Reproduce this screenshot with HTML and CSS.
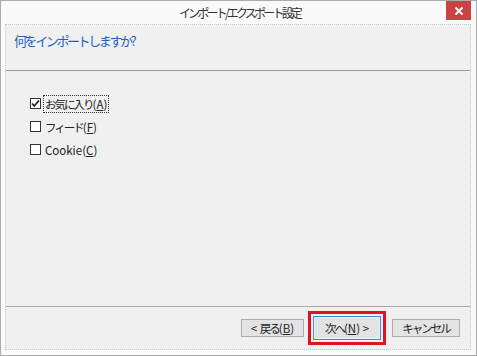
FILE: index.html
```html
<html>

<head>
	<link rel="stylesheet" href="styles.css">
</head>

<body>
	<div class="window">
		<div class="titlebar">
			<span class="title">インポート/エクスポート設定</span>
			<div class="close">
				<svg width="10" height="10" viewBox="0 0 10 10">
					<path d="M1.5 1.5 L8.5 8.5 M8.5 1.5 L1.5 8.5" stroke="#fff" stroke-width="2" />
				</svg>
			</div>
		</div>

		<div class="panel">
			<div class="header">何をインポートしますか?</div>

			<div class="options">
				<label class="option">
					<span class="box">
						<svg width="9" height="9" viewBox="0 0 9 9">
							<path d="M1 4.5 L3.3 7 L8 1.5" stroke="#222" stroke-width="1.8" fill="none" />
						</svg>
					</span>
					<span class="label focused"><span class="jp">お気に入り</span>(<u>A</u>)</span>
				</label>
				<label class="option">
					<span class="box"></span>
					<span class="label"><span class="jp">フィード</span>(<u>F</u>)</span>
				</label>
				<label class="option">
					<span class="box"></span>
					<span class="label">Cookie(<u>C</u>)</span>
				</label>
			</div>

			<div class="footer">
				<button class="btn back">&lt;&nbsp;<span class="jp">戻る</span>(<u>B</u>)</button>
				<div class="highlight">
					<button class="btn next"><span class="jp">次へ</span>(<u>N</u>)&nbsp;&gt;</button>
				</div>
				<button class="btn cancel"><span class="jp">キャンセル</span></button>
			</div>
		</div>
	</div>
</body>

</html>
```

FILE: styles.css
```css
:root {
	--frame: #ababab;
	--panel: #f0f0f0;
	--blue-text: #1c62c4;
	--red: #c94343;
	--mark: #e0141e;
}

body {
	margin: 0;
	background: #fff;
	font-family: "Noto Sans CJK JP", "Noto Sans", sans-serif;
	color: #222;
}

.window {
	width: 477px;
	height: 356px;
	box-sizing: border-box;
	border: 1px solid var(--frame);
	background: #f9f9f9;
	display: flex;
	flex-direction: column;
	position: relative;
}

.titlebar {
	height: 23px;
	display: flex;
	justify-content: center;
	align-items: center;
}

.title {
	font-size: 12px;
	letter-spacing: -2.8px;
	color: #333;
	padding-left: 2px;
}

.close {
	position: absolute;
	top: 0;
	right: 5px;
	width: 25px;
	height: 19px;
	background: var(--red);
	display: flex;
	justify-content: center;
	align-items: center;
}

.panel {
	flex: 1;
	margin: 0 5px 5px 4px;
	border: 1px dotted #c8c8c8;
	background: var(--panel);
	display: flex;
	flex-direction: column;
}

.header {
	height: 46px;
	border-bottom: 1px solid #9a9a9a;
	padding: 6px 0 0 8px;
	box-sizing: border-box;
	font-size: 13px;
	letter-spacing: -2.4px;
	color: var(--blue-text);
}

.options {
	flex: 1;
	padding: 25px 0 0 24px;
	display: flex;
	flex-direction: column;
	gap: 8px;
	border-bottom: 1px solid #a8a8a8;
}

.option {
	display: flex;
	align-items: center;
	height: 15px;
	font-size: 11.5px;
	color: #222;
}

.jp {
	letter-spacing: -2px;
}

.box {
	width: 9px;
	height: 9px;
	border: 1px solid #333;
	background: #fff;
	margin-right: 2px;
	display: flex;
	justify-content: center;
	align-items: center;
}

.label {
	padding: 0 1px;
	border: 1px dotted transparent;
}

.label.focused {
	border-color: #333;
}

.footer {
	height: 42px;
	display: flex;
	align-items: center;
	justify-content: flex-end;
	padding-right: 10px;
}

.btn {
	height: 18px;
	padding: 0;
	font-family: inherit;
	font-size: 11.5px;
	color: #222;
	background: #e3e3e3;
	border: 1px solid #adadad;
}

.back {
	width: 63px;
}

.highlight {
	border: 3px solid var(--mark);
	padding: 2px;
	margin: 0 6px 0 4px;
	display: flex;
}

.next {
	width: 68px;
	height: 24px;
	border: 1px solid #3c8fd6;
	box-shadow: inset 0 0 0 1px #e8f2fb;
}

.cancel {
	width: 68px;
}
```
